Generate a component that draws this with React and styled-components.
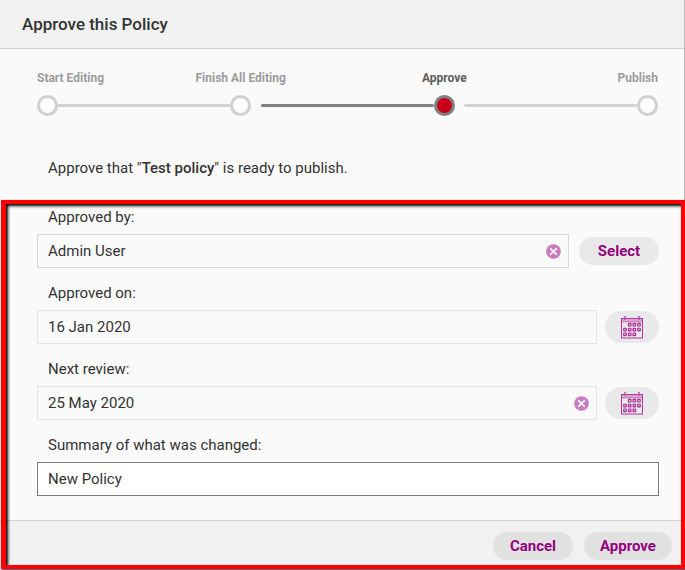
import React, { useState } from "react";
import styled, { createGlobalStyle } from "styled-components";

const GlobalStyle = createGlobalStyle`
  *, *::before, *::after { box-sizing: border-box; }
  body {
    margin: 0;
    background: #fafafa;
    color: #333;
    font-family: Roboto, "Liberation Sans", sans-serif;
    font-size: 15px;
  }
`;

const Dialog = styled.main`
  display: flex;
  flex-direction: column;
  min-height: 100vh;
  border-right: 1px solid #bdbdbd;
`;

const Header = styled.header`
  padding: 12px 22px;
  background: #f1f1f1;
  border-bottom: 1px solid #d2d2d2;
`;

const Title = styled.h1`
  margin: 0;
  font-size: 17px;
  line-height: 24px;
  font-weight: 500;
`;

const Steps = styled.ol`
  display: flex;
  align-items: flex-end;
  margin: 0;
  padding: 21px 26px 0 37px;
  list-style: none;
`;

const Step = styled.li`
  display: flex;
  flex: ${(p) => (p.$first ? "none" : "1")};
  align-items: flex-end;
  margin-left: ${(p) => (p.$gap ? "10px" : "0")};
`;

const Line = styled.span`
  flex: 1;
  height: 3px;
  margin-bottom: 9px;
  border-radius: 2px;
  background: ${(p) => (p.$active ? "#808080" : "#d2d2d2")};
`;

const Node = styled.span`
  display: flex;
  flex-direction: column;
  gap: 9px;
  width: 20px;
  align-items: ${(p) => p.$align};
`;

const StepLabel = styled.span`
  font-size: 12px;
  line-height: 16px;
  font-weight: 700;
  white-space: nowrap;
  color: ${(p) => (p.$active ? "#5c5c5c" : "#9c9c9c")};
`;

const Dot = styled.span`
  width: 21px;
  height: 21px;
  border-radius: 50%;
  border: 3px solid ${(p) => (p.$active ? "#808080" : "#d0d0d0")};
  background: ${(p) => (p.$active ? "#c70018" : "#fdfdfd")};
`;

const Message = styled.p`
  margin: 0;
  padding: 42px 48px 22px;
  line-height: 20px;

  strong { font-weight: 500; }
`;

const Form = styled.form`
  position: relative;
  display: flex;
  flex: 1;
  flex-direction: column;
`;

const Highlight = styled.div`
  position: absolute;
  inset: 0 -1px 1px 1px;
  border: solid #f00;
  border-width: 4px 4px 4px 5px;
  box-shadow: 1px 1px 2px #222, inset 2px 2px 3px #000;
  pointer-events: none;
`;

const Fields = styled.div`
  display: flex;
  flex: 1;
  flex-direction: column;
  gap: 8px;
  padding: 0 25px 24px 37px;
`;

const Label = styled.label`
  display: block;
  padding-left: 11px;
  line-height: 34px;
`;

const Row = styled.div`
  display: flex;
  align-items: center;
  gap: ${(p) => p.$gap || "8px"};
`;

const Box = styled.div`
  display: flex;
  flex: 1;
  align-items: center;
  height: 34px;
  padding: 0 7px 0 10px;
  border: 1px solid ${(p) => p.$border};
  background: ${(p) => (p.$editable ? "#fff" : "#fafafa")};
`;

const Input = styled.input`
  flex: 1;
  min-width: 0;
  height: 100%;
  padding: 0;
  border: 0;
  outline: 0;
  background: transparent;
  color: #333;
  font: inherit;
`;

const ClearButton = styled.button`
  display: flex;
  padding: 0;
  border: 0;
  background: none;
  cursor: pointer;
`;

const Pill = styled.button`
  height: 28px;
  padding: 0;
  min-width: ${(p) => p.$width || "80px"};
  border: 0;
  border-radius: 14px;
  background: ${(p) => (p.$dark ? "#e1e1e1" : "#e9e9e9")};
  color: #94007d;
  font: inherit;
  font-weight: 700;
  cursor: pointer;
`;

const IconPill = styled.button`
  display: flex;
  align-items: center;
  justify-content: center;
  width: 54px;
  height: 32px;
  padding: 0;
  border: 0;
  border-radius: 16px;
  background: #e9e9e9;
  cursor: pointer;
`;

const Footer = styled.footer`
  display: flex;
  justify-content: flex-end;
  gap: 11px;
  padding: 11px 12px 10px;
  background: #f1f1f1;
  border-top: 1px solid #d2d2d2;
`;

const ClearIcon = () => (
  <svg width="15" height="15" viewBox="0 0 15 15" aria-hidden="true">
    <circle cx="7.5" cy="7.5" r="7.3" fill="#cb7bbd" />
    <path d="M4.6 4.6l5.8 5.8M10.4 4.6l-5.8 5.8" stroke="#fff" strokeWidth="1.5" strokeLinecap="round" />
  </svg>
);

const days = [
  [8.7, 8.7], [13.3, 8.7], [18, 8.7],
  [4, 13.6], [8.7, 13.6], [13.3, 13.6], [18, 13.6],
  [4, 18.3], [8.7, 18.3], [13.3, 18.3],
];

const CalendarIcon = () => (
  <svg width="22" height="23" viewBox="0 0 22 23" aria-hidden="true">
    <rect x="0.5" y="2.5" width="21" height="3.5" fill="#d9a5d0" />
    <rect x="0.5" y="2.5" width="21" height="19.5" fill="none" stroke="#b0359c" />
    <path d="M1 5.8h20" stroke="#c67bba" />
    <path d="M4 0v4M18 0v4" stroke="#bd5dae" strokeWidth="1.6" />
    {days.map(([x, y]) => (
      <rect key={`${x}-${y}`} x={x - 1.3} y={y - 1.3} width="2.6" height="2.6" rx="0.3" fill="#e3bcdc" stroke="#ab2c97" strokeWidth="1.1" />
    ))}
  </svg>
);

const steps = [
  { label: "Start Editing", align: "flex-start" },
  { label: "Finish All Editing", align: "center" },
  { label: "Approve", align: "center", active: true, gap: true },
  { label: "Publish", align: "flex-end", gap: true },
];

function Field({ id, label, initial, border, editable, clearable, action, gap }) {
  const [value, setValue] = useState(initial);
  return (
    <div>
      <Label htmlFor={id}>{label}</Label>
      <Row $gap={gap}>
        <Box $border={border} $editable={editable}>
          <Input id={id} type="text" value={value} readOnly={!editable} onChange={(e) => setValue(e.target.value)} />
          {clearable && (
            <ClearButton type="button" aria-label={`Clear ${label}`} onClick={() => setValue("")}>
              <ClearIcon />
            </ClearButton>
          )}
        </Box>
        {action}
      </Row>
    </div>
  );
}

export default function App() {
  return (
    <>
      <GlobalStyle />
      <Dialog>
        <Header>
          <Title>Approve this Policy</Title>
        </Header>
        <Steps>
          {steps.map((s, i) => (
            <Step key={s.label} $first={i === 0} $gap={s.gap}>
              {i > 0 && <Line $active={s.active} />}
              <Node $align={s.align}>
                <StepLabel $active={s.active}>{s.label}</StepLabel>
                <Dot $active={s.active} />
              </Node>
            </Step>
          ))}
        </Steps>
        <Message>
          Approve that "<strong>Test policy</strong>" is ready to publish.
        </Message>
        <Form onSubmit={(e) => e.preventDefault()}>
          <Fields>
            <Field id="approved-by" label="Approved by:" initial="Admin User" border="#d9d9d9" clearable gap="10px"
              action={<Pill type="button">Select</Pill>} />
            <Field id="approved-on" label="Approved on:" initial="16 Jan 2020" border="#e5e5e5"
              action={<IconPill type="button" aria-label="Choose approval date"><CalendarIcon /></IconPill>} />
            <Field id="next-review" label="Next review:" initial="25 May 2020" border="#e5e5e5" clearable
              action={<IconPill type="button" aria-label="Choose review date"><CalendarIcon /></IconPill>} />
            <Field id="summary" label="Summary of what was changed:" initial="New Policy" border="#7d7d7d" editable />
          </Fields>
          <Footer>
            <Pill type="button" $dark>Cancel</Pill>
            <Pill type="submit" $dark $width="88px">Approve</Pill>
          </Footer>
          <Highlight />
        </Form>
      </Dialog>
    </>
  );
}
